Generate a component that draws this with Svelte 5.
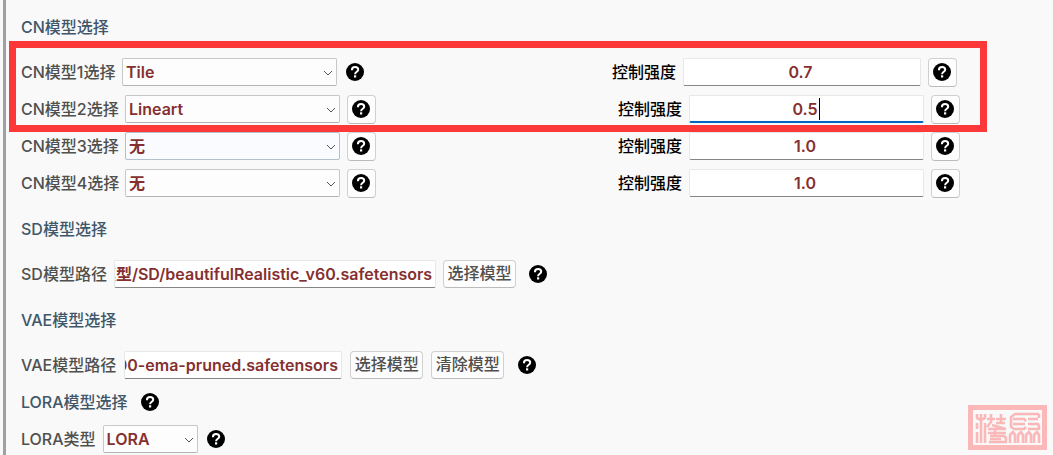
<script>
  import { onMount } from 'svelte';

  const strengths = [
    { n: 1, model: 'Tile', value: '0.7', first: true, plain: true },
    { n: 2, model: 'Lineart', value: '0.5', focused: true },
    { n: 3, model: '无', value: '1.0', hover: true },
    { n: 4, model: '无', value: '1.0' }
  ];

  let sdInput;
  let vaeInput;

  // Long paths show their file name, so both boxes are scrolled to the end.
  onMount(() => {
    const toEnd = () => {
      for (const el of [sdInput, vaeInput]) el.scrollLeft = el.scrollWidth;
    };
    toEnd();
    document.fonts.ready.then(toEnd);
  });
</script>

{#snippet help(framed)}
  <button class="help" class:framed type="button" aria-label="?">
    <svg viewBox="0 0 18 18" width="18" height="18" aria-hidden="true">
      <circle cx="9" cy="9" r="9" fill="#000" />
      <path d="M5.9 7.2C5.9 5 7.2 4.1 9.1 4.1S12.2 5.1 12.2 6.7C12.2 8.8 9.1 8.7 9.1 11.2" fill="none" stroke="#fff" stroke-width="2" />
      <rect x="8" y="12.3" width="2.2" height="2.2" fill="#fff" />
    </svg>
  </button>
{/snippet}

{#snippet chevron()}
  <svg class="chevron" viewBox="0 0 10 6" width="10" height="6" aria-hidden="true">
    <path d="M1 1L5 5L9 1" fill="none" stroke="#555" stroke-width="1" />
  </svg>
{/snippet}

<main>
  <h2>CN模型选择</h2>
  <section class="stack">
    {#each strengths as s}
      <div class="row cn" class:first={s.first}>
        <label class="name" for="model{s.n}">CN模型{s.n}选择</label>
        <div class="select" class:hover={s.hover}>
          <select id="model{s.n}"><option>{s.model}</option></select>
          {@render chevron()}
        </div>
        {@render help(!s.plain)}
        <div class="strength">
          <label for="strength{s.n}">控制强度</label>
          <span class="field" class:focused={s.focused}>
            <input id="strength{s.n}" type="text" value={s.value} />
            {#if s.focused}<i class="caret"></i>{/if}
          </span>
          {@render help(true)}
        </div>
      </div>
    {/each}
    <div class="frame"></div>
  </section>

  <h2>SD模型选择</h2>
  <div class="row">
    <label class="name" for="sd">SD模型路径</label>
    <span class="path sd"><input id="sd" type="text" bind:this={sdInput} value="模型/SD/beautifulRealistic_v60.safetensors" /></span>
    <button class="action" type="button">选择模型</button>
    {@render help(false)}
  </div>

  <h2>VAE模型选择</h2>
  <div class="row vae-row">
    <label class="name" for="vae">VAE模型路径</label>
    <span class="path vae"><input id="vae" type="text" bind:this={vaeInput} value="000-ema-pruned.safetensors" /></span>
    <button class="action" type="button">选择模型</button>
    <button class="action" type="button">清除模型</button>
    {@render help(false)}
  </div>

  <div class="row lora">
    <h3>LORA模型选择</h3>
    {@render help(false)}
  </div>
  <div class="row">
    <label class="name" for="lora">LORA类型</label>
    <div class="select small">
      <select id="lora"><option>LORA</option></select>
      {@render chevron()}
    </div>
    {@render help(false)}
  </div>

  <svg class="stamp" viewBox="0 0 79 45" width="79" height="45" aria-hidden="true">
    <rect x="2.5" y="2.5" width="74" height="40" fill="none" stroke="#fbb8b8" stroke-width="5" />
    <g fill="none" stroke="#fbb8b8" stroke-width="2.6" stroke-linejoin="round">
      <path d="M9 9V13L13 15L17 13V9M13 9V38M9 18V24M9 27V38M17 18V38" />
      <path d="M23 9V17L19 22M19 14H27M33 9V17M28 14H38M28 18H37M24 20L38 24M20 24H38M20 28H38M27 24V30M22 31H36L38 33V37H21M22 34H33" />
      <path d="M71 9H47L43 12V22L46 24H56L58 22M45 14H56L58 16M45 19H57M60 14H70M71 9V13M60 19H70L71 21V24H60" />
      <path d="M42 38V30L45 27L47 30V38M50 38V30L53 27L55 30V38M58 38V30L61 27L63 30V38M66 38V30L69 27L71 30V38" />
    </g>
  </svg>
</main>

<style>
  :global(body) {
    margin: 0;
    background: #f9f9f9;
  }
  main {
    position: relative;
    border-left: 3px solid #a0a0a0;
    margin-left: 3px;
    padding: 13px 93px 2px 15px;
    font: 500 16px/28px Inter, "Noto Sans CJK SC", sans-serif;
    color: #50504e;
  }
  h2, h3 {
    margin: 0;
    font: inherit;
    color: #40576a;
  }
  h2 {
    margin-bottom: 17px;
  }
  .row {
    display: flex;
    align-items: center;
    gap: 7px;
    height: 28px;
    margin-bottom: 18px;
    white-space: nowrap;
  }
  .stack {
    position: relative;
    display: grid;
    gap: 9px;
    margin-bottom: 18px;
  }
  .stack .row {
    margin: 0;
  }
  .cn .name {
    width: 97px;
  }
  .first {
    padding-right: 3px;
  }
  .first .name {
    width: 94px;
  }
  .select {
    position: relative;
    width: 215px;
    flex: none;
  }
  .small {
    width: 95px;
  }
  select, input, button {
    box-sizing: border-box;
    height: 28px;
    margin: 0;
    font: inherit;
    outline: none;
  }
  select, input {
    display: block;
    width: 100%;
    color: #853030;
    font-weight: 600;
  }
  select {
    appearance: none;
    padding: 0 20px 0 3px;
    border: 1px solid #c8c8c8;
    border-bottom-color: #b4b4b4;
    border-radius: 2px;
    background: #fdfdfd;
    line-height: 26px;
  }
  .hover select {
    border-color: #b3bfc9;
    background: #f9fbfe;
  }
  .chevron {
    position: absolute;
    right: 4px;
    top: 12px;
  }
  .strength {
    display: flex;
    align-items: center;
    gap: 7px;
    margin-left: auto;
    color: #000;
  }
  .field {
    position: relative;
    width: 235px;
  }
  .first .field {
    width: 238px;
  }
  input {
    padding: 0 3px 0 0;
    border: 1px solid #e8e8e8;
    border-bottom-color: #858585;
    border-radius: 2px;
    background: #fff;
  }
  .field input {
    text-align: center;
  }
  .focused input {
    border-bottom: 2px solid #0067c0;
  }
  .caret {
    position: absolute;
    left: 130px;
    top: 3px;
    width: 1px;
    height: 22px;
    background: #000;
  }
  .sd { width: 322px; }
  .vae { width: 218px; }
  .help {
    display: grid;
    place-items: center;
    flex: none;
    width: 18px;
    height: 18px;
    margin-left: 6px;
    padding: 0;
    border: 0;
    background: none;
  }
  .select + .help {
    margin-left: 2px;
  }
  .help.framed {
    width: 29px;
    height: 29px;
    margin-left: 0;
    padding-right: 1px;
  }
  .help.framed, .action {
    border: 1px solid #d0d0d0;
    border-bottom-color: #bbb;
    border-radius: 4px;
    background: #fdfdfd;
  }
  .action {
    width: 73px;
    padding: 0 0 2px;
    line-height: 24px;
    color: #50504e;
  }
  .vae-row {
    gap: 8px;
    margin-bottom: 9px;
  }
  .lora {
    margin-bottom: 9px;
  }
  .row:last-of-type {
    margin-bottom: 0;
  }
  .frame {
    position: absolute;
    inset: -17px -27px 65px -12px;
    border: 7px solid #fd3838;
    pointer-events: none;
  }
  .stamp {
    position: absolute;
    right: 6px;
    bottom: 5px;
  }
</style>
